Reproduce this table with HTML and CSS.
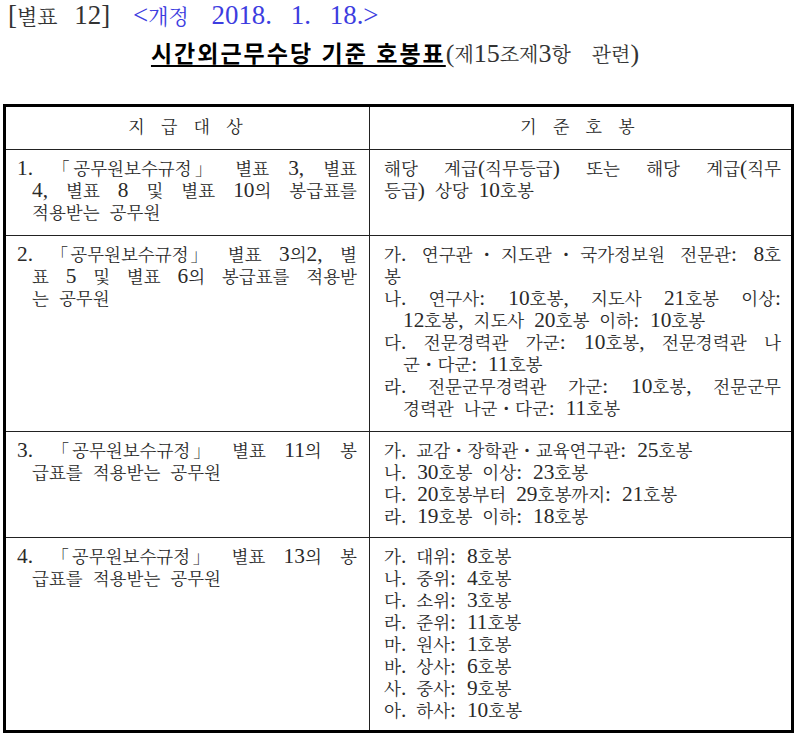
FILE: index.html
```html
<!DOCTYPE html>
<html lang="ko">
<head>
<meta charset="utf-8">
<title>시간외근무수당 기준 호봉표</title>
<link rel="stylesheet" href="styles.css">
</head>
<body>
<div class="page">
  <div class="ref"><span class="ref-num"><span class="n">[</span>별표 <span class="n">12]</span></span> <span class="rev"><span class="n">&lt;</span>개정 <span class="n date">2018. 1. 18.&gt;</span></span></div>
  <h1 class="title"><span class="title-main">시간외근무수당 기준 호봉표</span><span class="title-sub"><span class="n">(</span>제<span class="n">15</span>조제<span class="n">3</span>항 관련<span class="n">)</span></span></h1>

  <div class="grid">
    <div class="cell head left">지 급 대 상</div>
    <div class="cell head right">기 준 호 봉</div>

    <div class="cell left r1">
      <p class="item"><span class="jl"><span class="n">1.</span> <span class="qo">「</span>공무원보수규<span class="qp">정</span><span class="qc">」</span> 별표 <span class="n">3,</span> 별표</span><span class="jl ind"><span class="n">4,</span> 별표 <span class="n">8</span> 및 별표 <span class="n">10</span>의 봉급표를</span><span class="ll ind">적용받는 공무원</span></p>
    </div>
    <div class="cell right r1">
      <p class="item"><span class="jl">해당 계급<span class="n">(</span>직무등급<span class="n">)</span> 또는 해당 계급<span class="n">(</span>직무</span><span class="ll">등급<span class="n">)</span> 상당 <span class="n">10</span>호봉</span></p>
    </div>

    <div class="cell left r2">
      <p class="item"><span class="jl"><span class="n">2.</span> <span class="qo">「</span>공무원보수규<span class="qp">정</span><span class="qc">」</span> 별표 <span class="n">3</span>의<span class="n">2,</span> 별</span><span class="jl ind">표 <span class="n">5</span> 및 별표 <span class="n">6</span>의 봉급표를 적용받</span><span class="ll ind">는 공무원</span></p>
    </div>
    <div class="cell right r2">
      <p class="item"><span class="jl">가<span class="n">.</span> 연구관・지도관・국가정보원 전문관<span class="n">: 8</span>호</span><span class="ll">봉</span></p>
      <p class="item"><span class="jl">나<span class="n">.</span> 연구사<span class="n">: 10</span>호봉<span class="n">,</span> 지도사 <span class="n">21</span>호봉 이상<span class="n">:</span></span><span class="ll ind"><span class="n">12</span>호봉<span class="n">,</span> 지도사 <span class="n">20</span>호봉 이하<span class="n">: 10</span>호봉</span></p>
      <p class="item"><span class="jl">다<span class="n">.</span> 전문경력관 가군<span class="n">: 10</span>호봉<span class="n">,</span> 전문경력관 나</span><span class="ll ind">군・다군<span class="n">: 11</span>호봉</span></p>
      <p class="item"><span class="jl">라<span class="n">.</span> 전문군무경력관 가군<span class="n">: 10</span>호봉<span class="n">,</span> 전문군무</span><span class="ll ind">경력관 나군・다군<span class="n">: 11</span>호봉</span></p>
    </div>

    <div class="cell left r3">
      <p class="item"><span class="jl"><span class="n">3.</span> <span class="qo">「</span>공무원보수규<span class="qp">정</span><span class="qc">」</span> 별표 <span class="n">11</span>의 봉</span><span class="ll ind">급표를 적용받는 공무원</span></p>
    </div>
    <div class="cell right r3">
      <p class="item">가<span class="n">.</span> 교감・장학관・교육연구관<span class="n">: 25</span>호봉</p>
      <p class="item">나<span class="n">. 30</span>호봉 이상<span class="n">: 23</span>호봉</p>
      <p class="item">다<span class="n">. 20</span>호봉부터 <span class="n">29</span>호봉까지<span class="n">: 21</span>호봉</p>
      <p class="item">라<span class="n">. 19</span>호봉 이하<span class="n">: 18</span>호봉</p>
    </div>

    <div class="cell left r4">
      <p class="item"><span class="jl"><span class="n">4.</span> <span class="qo">「</span>공무원보수규<span class="qp">정</span><span class="qc">」</span> 별표 <span class="n">13</span>의 봉</span><span class="ll ind">급표를 적용받는 공무원</span></p>
    </div>
    <div class="cell right r4">
      <p class="item">가<span class="n">.</span> 대위<span class="n">: 8</span>호봉</p>
      <p class="item">나<span class="n">.</span> 중위<span class="n">: 4</span>호봉</p>
      <p class="item">다<span class="n">.</span> 소위<span class="n">: 3</span>호봉</p>
      <p class="item">라<span class="n">.</span> 준위<span class="n">: 11</span>호봉</p>
      <p class="item">마<span class="n">.</span> 원사<span class="n">: 1</span>호봉</p>
      <p class="item">바<span class="n">.</span> 상사<span class="n">: 6</span>호봉</p>
      <p class="item">사<span class="n">.</span> 중사<span class="n">: 9</span>호봉</p>
      <p class="item">아<span class="n">.</span> 하사<span class="n">: 10</span>호봉</p>
    </div>
  </div>
</div>
</body>
</html>
```

FILE: styles.css
```css
html, body {
  margin: 0;
  padding: 0;
  background: #fff;
}

body {
  font-family: "Liberation Serif", "Noto Serif CJK KR", "Noto Sans CJK KR", serif;
  color: #2a2a2a;
  word-spacing: 0.35em;
}

.n {
  font-size: 1.22em;
  line-height: 0;
}

.qo {
  letter-spacing: -0.3em;
}

.qp {
  letter-spacing: -0.32em;
}

.qc {
  letter-spacing: -0.3em;
}

.page {
  width: 800px;
  padding-top: 4px;
}

.ref {
  margin-left: 8px;
  font-size: 21px;
  line-height: 26px;
  height: 26px;
  white-space: nowrap;
  word-spacing: 0.55em;
}

.ref .n {
  font-size: 1.28em;
}

.ref .date {
  margin-left: 6px;
  word-spacing: 0.45em;
}

.ref-num {
  color: #333;
}

.rev {
  color: #3d3de0;
  margin-left: 6px;
}

.title {
  margin: 6px 0 0 0;
  padding-right: 10px;
  text-align: center;
  font-weight: normal;
  line-height: 30px;
  height: 30px;
  white-space: nowrap;
  word-spacing: 0;
}

.title-main {
  font-family: "Noto Sans CJK KR", sans-serif;
  font-weight: bold;
  font-size: 23px;
  letter-spacing: 2px;
  color: #000;
  text-decoration: underline;
  text-decoration-thickness: 2px;
  text-underline-offset: 3px;
}

.title-sub {
  font-size: 20px;
  color: #333;
  margin-left: 0;
  word-spacing: 0.8em;
}

.title-sub .n {
  font-size: 1.3em;
}

.grid {
  margin: 38px 0 0 3px;
  width: 791px;
  box-sizing: border-box;
  border: 3px solid #000;
  display: grid;
  grid-template-columns: 364px 1fr;
  grid-template-rows: 43px 86px 196px 106px 192px;
  font-size: 17.5px;
  line-height: 22px;
}

.cell {
  box-sizing: border-box;
  border-bottom: 1px solid #222;
}

.cell.left {
  border-right: 1px solid #222;
  padding: 8px 12px 0 11px;
}

.cell.right {
  padding: 8px 10px 0 14px;
}

.cell.r4 {
  border-bottom: none;
}

.cell.head {
  display: flex;
  align-items: center;
  justify-content: center;
  padding: 0;
  font-size: 17px;
  letter-spacing: 6px;
  word-spacing: 0;
}

.cell.head.left {
  padding-left: 2px;
}

.item {
  margin: 0;
}

.jl {
  display: block;
  text-align: justify;
  text-align-last: justify;
  text-justify: inter-word;
}

.ll {
  display: block;
}

.ind {
  padding-left: 15px;
}

.cell.right .ind {
  padding-left: 19px;
}
```
